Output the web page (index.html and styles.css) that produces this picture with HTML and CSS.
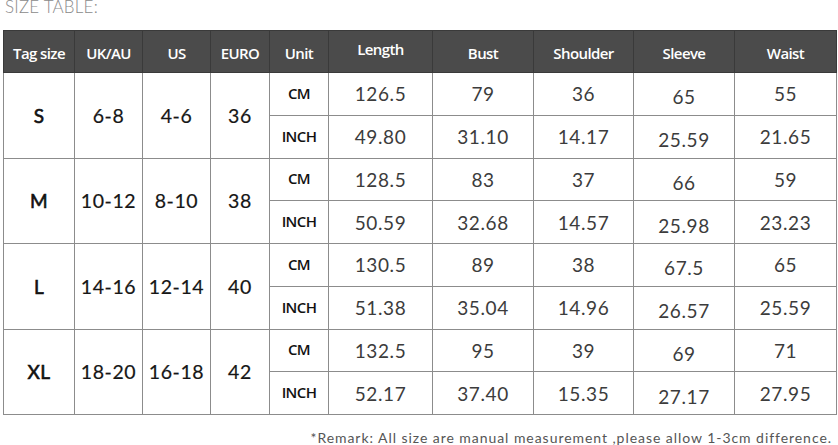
FILE: index.html
```html
<!DOCTYPE html>
<html>
<head>
<meta charset="utf-8">
<link rel="stylesheet" href="styles.css">
</head>
<body>
<div class="page">
  <div class="title">SIZE TABLE:</div>
  <table class="size-table">
    <colgroup>
      <col class="c-tag"><col class="c-uk"><col class="c-us"><col class="c-eu"><col class="c-unit">
      <col class="c-len"><col class="c-bust"><col class="c-sh"><col class="c-sl"><col class="c-wa">
    </colgroup>
    <thead>
      <tr>
        <th>Tag size</th><th>UK/AU</th><th>US</th><th>EURO</th><th>Unit</th>
        <th class="hi">Length</th><th>Bust</th><th>Shoulder</th><th>Sleeve</th><th>Waist</th>
      </tr>
    </thead>
    <tbody>
      <tr>
        <td rowspan="2" class="tag">S</td><td rowspan="2" class="sz">6-8</td><td rowspan="2" class="sz">4-6</td><td rowspan="2" class="sz">36</td>
        <td class="unit">CM</td><td>126.5</td><td>79</td><td>36</td><td class="low">65</td><td>55</td>
      </tr>
      <tr>
        <td class="unit">INCH</td><td>49.80</td><td>31.10</td><td>14.17</td><td class="low">25.59</td><td>21.65</td>
      </tr>
      <tr>
        <td rowspan="2" class="tag">M</td><td rowspan="2" class="sz">10-12</td><td rowspan="2" class="sz">8-10</td><td rowspan="2" class="sz">38</td>
        <td class="unit">CM</td><td>128.5</td><td>83</td><td>37</td><td class="low">66</td><td>59</td>
      </tr>
      <tr>
        <td class="unit">INCH</td><td>50.59</td><td>32.68</td><td>14.57</td><td class="low">25.98</td><td>23.23</td>
      </tr>
      <tr>
        <td rowspan="2" class="tag">L</td><td rowspan="2" class="sz">14-16</td><td rowspan="2" class="sz">12-14</td><td rowspan="2" class="sz">40</td>
        <td class="unit">CM</td><td>130.5</td><td>89</td><td>38</td><td class="low">67.5</td><td>65</td>
      </tr>
      <tr>
        <td class="unit">INCH</td><td>51.38</td><td>35.04</td><td>14.96</td><td class="low">26.57</td><td>25.59</td>
      </tr>
      <tr>
        <td rowspan="2" class="tag">XL</td><td rowspan="2" class="sz">18-20</td><td rowspan="2" class="sz">16-18</td><td rowspan="2" class="sz">42</td>
        <td class="unit">CM</td><td>132.5</td><td>95</td><td>39</td><td class="low">69</td><td>71</td>
      </tr>
      <tr>
        <td class="unit">INCH</td><td>52.17</td><td>37.40</td><td>15.35</td><td class="low">27.17</td><td>27.95</td>
      </tr>
    </tbody>
  </table>
  <div class="remark">*Remark: All size are manual measurement ,please allow 1-3cm difference.</div>
</div>
</body>
</html>
```

FILE: styles.css
```css
html, body {
  margin: 0;
  padding: 0;
  background: #fff;
}
.page {
  width: 838px;
  height: 445px;
  overflow: hidden;
  padding-left: 3px;
  box-sizing: border-box;
}
.title {
  font-family: "Lato", "DejaVu Sans", sans-serif;
  font-weight: 300;
  font-size: 17px;
  line-height: 20px;
  height: 26px;
  margin-top: -3px;
  margin-left: 2px;
  margin-bottom: 7px;
  color: #8a8a8a;
  letter-spacing: 0.2px;
}
.size-table {
  border-collapse: collapse;
  table-layout: fixed;
  width: 833px;
}
.c-tag { width: 71px; }
.c-uk { width: 68px; }
.c-us { width: 68px; }
.c-eu { width: 59px; }
.c-unit { width: 59px; }
.c-len { width: 104px; }
.c-bust { width: 101px; }
.c-sh { width: 100px; }
.c-sl { width: 101px; }
.c-wa { width: 102px; }

.size-table th,
.size-table td {
  border: 1px solid #8c8c8c;
  padding: 0;
  text-align: center;
  vertical-align: middle;
  white-space: nowrap;
}
.size-table thead tr { height: 42px; }
.size-table th {
  background: #4b4b4b;
  color: #fff;
  font-family: "Open Sans", "DejaVu Sans", sans-serif;
  font-weight: 600;
  font-size: 15px;
  letter-spacing: -0.6px;
  border-color: #3a3a3a;
  padding-top: 2px;
}
.size-table th.hi { padding-top: 0; padding-bottom: 6px; }
.size-table tbody tr { height: 42.75px; }
.size-table td {
  font-family: "Lato", "DejaVu Sans", sans-serif;
  font-weight: 400;
  font-size: 19px;
  color: #3c3c3c;
  letter-spacing: 0.6px;
}
.size-table td.tag {
  font-weight: 400;
  color: #111;
  font-size: 19px;
  letter-spacing: 0.4px;
  -webkit-text-stroke: 0.6px #111;
}
.size-table td.sz {
  font-weight: 400;
  color: #161616;
  font-size: 19.5px;
  letter-spacing: 0.6px;
  -webkit-text-stroke: 0.2px #161616;
}
.size-table td.unit {
  font-family: "Open Sans", "DejaVu Sans", sans-serif;
  font-weight: 600;
  font-size: 15px;
  color: #111;
  letter-spacing: -0.6px;
  padding-bottom: 2px;
}
.size-table td.low { padding-top: 6px; }
.remark {
  font-family: "Lato", "DejaVu Sans", sans-serif;
  font-size: 14px;
  line-height: 16px;
  color: #555;
  letter-spacing: 0.95px;
  text-align: right;
  padding-right: 6px;
  margin-top: 15px;
}
```
